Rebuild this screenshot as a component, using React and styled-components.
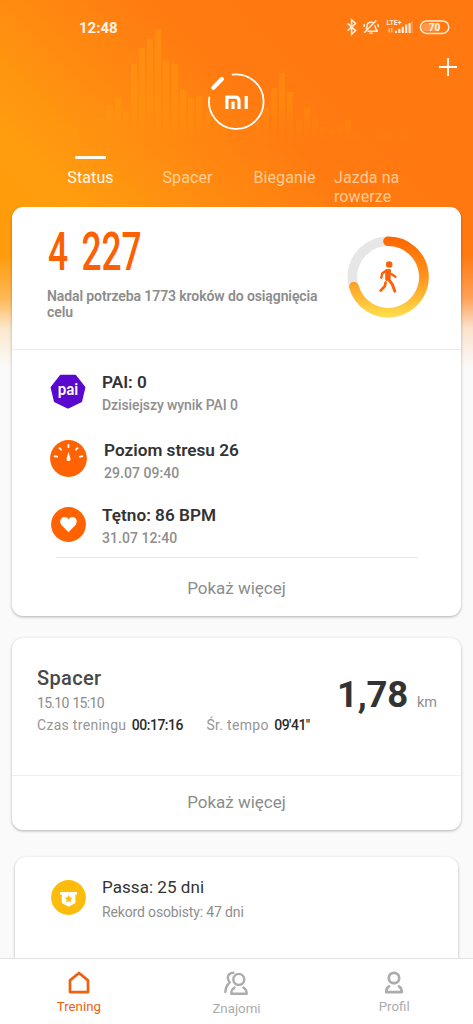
import React from 'react';
import styled, { createGlobalStyle } from 'styled-components';

const bars = [
  [48, 118], [56, 124], [64, 128], [72, 127], [80, 127], [90, 122],
  [98, 119], [107, 105], [115, 97], [123, 111], [131, 64], [139, 48],
  [147, 39], [155, 29], [163, 61], [172, 64], [180, 89], [188, 98],
  [196, 96], [205, 112], [213, 120], [221, 126], [255, 120], [263, 108],
  [271, 88], [279, 73], [287, 92], [296, 120], [304, 108], [312, 118],
  [320, 127], [329, 130], [337, 124], [345, 120], [353, 133], [361, 137],
  [377, 130], [385, 134], [401, 132],
];

function Wave() {
  return (
    <WaveSvg width="473" height="160" viewBox="0 0 473 160">
      <defs>
        <linearGradient id="wave" x1="0" y1="28" x2="0" y2="144" gradientUnits="userSpaceOnUse">
          <stop offset="0" stopColor="#ffa216" stopOpacity="0.4" />
          <stop offset="0.65" stopColor="#ffa00e" stopOpacity="0.32" />
          <stop offset="1" stopColor="#ff9a0e" stopOpacity="0" />
        </linearGradient>
      </defs>
      {bars.map(([x, y]) => (
        <rect key={x} x={x} y={y} width="6" height={144 - y} fill="url(#wave)" />
      ))}
    </WaveSvg>
  );
}

function StatusIcons() {
  return (
    <svg width="106" height="20" viewBox="345 17 106 20" fill="none" stroke="#ffeedd">
      <path d="M347.6 23.4l8 7.2-4 3.6V19.8l4 3.6-8 7.2" strokeWidth="1.5" />
      <path d="M366 29.6c.8-.9 1-1.9 1-3.2 0-2.4 1.6-4.2 4-4.2 1 0 1.9.3 2.6.9M375 25.2c.1 2.6.4 3.8 2 5.2v.9h-9.4M369.4 33.3h3.4M364.2 32.8l12-12.4M364.4 24.2l-.4 3M377.8 24.2l.5 2.8" strokeWidth="1.5" />
      <text x="386.5" y="25" fontSize="7" fontWeight="700" fontFamily="Roboto, sans-serif" fill="#ffeedd" stroke="none" textLength="15" lengthAdjust="spacingAndGlyphs">LTE+</text>
      <path d="M389.2 32.6v-4.4M391.8 28v4.4" strokeWidth="1" />
      <path d="M396 33v-2.2M399.4 33v-4.2M402.8 33v-6.2M406.2 33v-8.4M409.6 33V23" strokeWidth="2.2" />
      <path d="M412 33V21" strokeWidth="1.2" opacity="0.35" />
      <rect x="420.4" y="21" width="28.4" height="12.4" rx="6.2" strokeWidth="1.5" />
      <path d="M425.8 23.2h13.4v8h-13.4a4 4 0 0 1 0-8z" fill="#ffc494" fillOpacity="0.45" stroke="none" />
      <text x="434.4" y="30.7" fontSize="10" fontWeight="700" fontFamily="Roboto, sans-serif" fill="#fff4e8" stroke="none" textAnchor="middle">70</text>
    </svg>
  );
}

function MiLogo() {
  return (
    <svg width="60" height="60" viewBox="206 72 60 60" fill="none" stroke="#fff">
      <path d="M232.6 74.6A27.3 27.3 0 1 1 209.3 97.4" strokeWidth="1.8" strokeLinecap="round" />
      <path d="M213.3 87.8l8.6-8.8" strokeWidth="4.2" strokeLinecap="round" />
      <path d="M226.9 109V97.2h8.3q3.8 0 3.8 3.8V109M233 101.5v7.5M246.2 96v13" strokeWidth="3.2" />
    </svg>
  );
}

function StepsRing() {
  return (
    <svg width="82" height="82" viewBox="-41 -41 82 82">
      <defs>
        <linearGradient id="ring" x1="0" y1="-40" x2="0" y2="40" gradientUnits="userSpaceOnUse">
          <stop offset="0" stopColor="#ff6500" />
          <stop offset="0.5" stopColor="#ff941c" />
          <stop offset="1" stopColor="#ffdf4c" />
        </linearGradient>
      </defs>
      <circle r="35.7" fill="none" stroke="#e6e6e6" strokeWidth="9.6" />
      <path d="M0-35.7A35.7 35.7 0 1 1-34.1 9.6" fill="none" stroke="url(#ring)" strokeWidth="9.6" strokeLinecap="round" />
      <g fill="none" stroke="#fb6209" strokeLinecap="round" strokeLinejoin="round">
        <circle cx="1.2" cy="-12.5" r="3.3" fill="#fb6209" stroke="none" />
        <path d="M-1.4-6.4L1.6-6.6 1.2 1.6-1.4 2.6z" strokeWidth="2.8" fill="#fb6209" />
        <path d="M-1.6-6.4l-4.2 3L-6.7.8" strokeWidth="2.4" />
        <path d="M3.4-3L7.4-.2" strokeWidth="2.4" />
        <path d="M.2 2l4.2 5.4 2.4 6.8" strokeWidth="3" />
        <path d="M-2.4 5.6l-.8 3.6-4.2 4.4" strokeWidth="2.7" />
      </g>
    </svg>
  );
}

function PaiIcon() {
  return (
    <svg width="36" height="36" viewBox="-18 -18 36 36">
      <path
        d="M0 16.4L12.9 10.1 16.2-3.6 7.2-15H-7.2L-16.2-3.6-12.9 10.1z"
        fill="#5a08cf"
        stroke="#5a08cf"
        strokeWidth="2.4"
        strokeLinejoin="round"
      />
      <text x="0" y="3.8" textAnchor="middle" fontSize="16" fontWeight="600" fontFamily="Roboto, sans-serif" fill="#fff" textLength="20.5" lengthAdjust="spacingAndGlyphs">
        pai
      </text>
    </svg>
  );
}

function StressIcon() {
  return (
    <svg width="37" height="37" viewBox="-18.5 -18.5 37 37">
      <circle r="18.4" fill="#ff6200" />
      <path d="M0-6.8L2 .4q.2 2.2-2 2.2T-2 .4z" fill="#fff" />
      <path d="M0-13.6v2.2M-9-10.4l1.6 1.6M9-10.4L7.4-8.8M-13.8-2.2l2.4.3M13.8-2.2l-2.4.3" stroke="#fff" strokeWidth="1.9" strokeLinecap="round" />
    </svg>
  );
}

function HeartIcon() {
  return (
    <svg width="35" height="35" viewBox="-17.5 -17.5 35 35">
      <circle r="17.4" fill="#ff6200" />
      <path d="M0 7.8L-6.8.7C-10-3.2-7.4-7.4-4-7.4-2.2-7.4-.8-6.6 0-5.2.8-6.6 2.2-7.4 4-7.4 7.4-7.4 10-3.2 6.8.7z" fill="#fff" />
    </svg>
  );
}

function BadgeIcon() {
  return (
    <svg width="35" height="35" viewBox="-17.5 -17.5 35 35">
      <circle r="17.4" fill="#fbbc0b" />
      <path d="M-8.2-5.6H8.4v2.8H6.9V5.6L.1 9.2-6.7 5.6V-2.8h-1.5z" fill="#fff" />
      <path d="M.1-2.7l1.2 2.6 2.9.3L2 2.1l.6 2.8L.1 3.5-2.4 4.9-1.8 2.1-4 .2l2.9-.3z" fill="#fbbc0b" />
    </svg>
  );
}

function HomeIcon() {
  return (
    <svg width="24" height="24" viewBox="0 0 24 24" fill="none" stroke="currentColor" strokeWidth="2.7" strokeLinejoin="round">
      <path d="M3 9.4L12 2l9 7.4v11.7H3z" />
    </svg>
  );
}

function FriendsIcon() {
  return (
    <svg width="26" height="26" viewBox="0 0 26 26" fill="none" stroke="currentColor" strokeWidth="2.4" strokeLinecap="round">
      <circle cx="15.8" cy="8.4" r="5.5" />
      <path d="M11.6 16.5q-3.2 1.8-3.3 6.2h15.4q-.1-4.4-3.3-6.2" strokeLinejoin="round" />
      <path d="M10.4 1.8Q5.6 2.2 4.8 6.2q-.2 3 2 5.2M5.6 12.6Q2.6 15.6 2.4 21" />
    </svg>
  );
}

function ProfileIcon() {
  return (
    <svg width="24" height="24" viewBox="0 0 24 24" fill="none" stroke="currentColor" strokeWidth="2.7" strokeLinecap="round">
      <circle cx="12" cy="7" r="5.2" />
      <path d="M7 15.4q-2.8 1.8-2.7 5.7h15.4q.1-3.9-2.7-5.7" strokeLinejoin="round" />
    </svg>
  );
}

const metrics = [
  { icon: <PaiIcon />, title: 'PAI: 0', sub: 'Dzisiejszy wynik PAI 0', height: 69, indent: 0, space: -0.1 },
  { icon: <StressIcon />, title: 'Poziom stresu 26', sub: '29.07 09:40', height: 67, indent: 2, space: 0.05 },
  { icon: <HeartIcon />, title: 'Tętno: 86 BPM', sub: '31.07 12:40', height: 64, indent: 0, space: 0.05 },
];

function App() {
  return (
    <Screen>
      <GlobalStyle />
      <Wave />

      <Header>
        <StatusBar>
          <Clock>12:48</Clock>
          <StatusIcons />
        </StatusBar>
        <Toolbar>
          <span />
          <MiLogo />
          <AddButton aria-label="Dodaj">
            <svg width="20" height="20" viewBox="0 0 20 20" stroke="#fff" strokeWidth="1.8">
              <path d="M10 1v18M1 10h18" />
            </svg>
          </AddButton>
        </Toolbar>
        <Tabs>
          <Tab $active>Status</Tab>
          <Tab>Spacer</Tab>
          <Tab>Bieganie</Tab>
          <Tab $left>Jazda na rowerze</Tab>
        </Tabs>
      </Header>

      <Feed>
        <Card>
          <Summary>
            <div>
              <Steps>4 227</Steps>
              <Goal>Nadal potrzeba 1773 kroków do osiągnięcia celu</Goal>
            </div>
            <StepsRing />
          </Summary>
          <Metrics>
            {metrics.map((m) => (
              <Metric key={m.title} $height={m.height}>
                <IconSlot>{m.icon}</IconSlot>
                <MetricText $indent={m.indent}>
                  <h3>{m.title}</h3>
                  <MetricSub $space={m.space}>{m.sub}</MetricSub>
                </MetricText>
              </Metric>
            ))}
          </Metrics>
          <ShortRule />
          <More $height={58} $pad="1px 0 0">Pokaż więcej</More>
        </Card>

        <Card>
          <Workout>
            <WorkoutInfo>
              <h2>Spacer</h2>
              <time>15.10 15:10</time>
              <Stats>
                <Label>Czas treningu</Label>
                <Value>00:17:16</Value>
                <Label $gap>Śr. tempo</Label>
                <Value>09'41"</Value>
              </Stats>
            </WorkoutInfo>
            <Distance>
              <strong>1,78</strong>
              <span>km</span>
            </Distance>
          </Workout>
          <More $height={54} $pad="0 0 3px">Pokaż więcej</More>
        </Card>

        <Card $inset>
          <Streak>
            <BadgeIcon />
            <StreakText>
              <h3>Passa: 25 dni</h3>
              <p>Rekord osobisty: 47 dni</p>
            </StreakText>
          </Streak>
        </Card>
      </Feed>

      <Nav>
        <NavItem $active>
          <HomeIcon />
          <span>Trening</span>
        </NavItem>
        <NavItem>
          <FriendsIcon />
          <span>Znajomi</span>
        </NavItem>
        <NavItem>
          <ProfileIcon />
          <span>Profil</span>
        </NavItem>
      </Nav>
    </Screen>
  );
}

export default App;

const GlobalStyle = createGlobalStyle`
  * {
    box-sizing: border-box;
    margin: 0;
    padding: 0;
  }

  body {
    font-family: Roboto, 'Noto Sans', sans-serif;
    background: #fafafa;
    overflow: hidden;
  }

  svg {
    display: block;
    flex-shrink: 0;
  }
`;

const Screen = styled.div`
  position: relative;
  display: flex;
  flex-direction: column;
  width: 473px;
  height: 1024px;
  overflow: hidden;
  background:
    linear-gradient(to bottom, rgba(250, 250, 250, 0) 255px, rgba(250, 250, 250, 0.3) 298px, rgba(250, 250, 250, 0.8) 328px, #fafafa 368px),
    linear-gradient(45deg, #ff9a0c 0, #ff9c0c 115px, #ff9d0e 170px, #ff8e11 255px, #ff8810 290px, #ff8110 332px, #ff7a10 372px, #ff7810 100%) 0 0 / 473px 370px no-repeat,
    #fafafa;
`;

const WaveSvg = styled.svg`
  position: absolute;
  top: 0;
  left: 0;
`;

const Header = styled.header`
  position: relative;
  height: 207px;
  flex-shrink: 0;
`;

const StatusBar = styled.div`
  display: flex;
  align-items: center;
  justify-content: space-between;
  height: 54px;
  padding: 0 22px 0 79px;
`;

const Clock = styled.span`
  padding-top: 2px;
  color: #fff4e6;
  font-size: 15px;
  font-weight: 700;
  line-height: 20px;
`;

const Toolbar = styled.div`
  display: grid;
  grid-template-columns: 206px 60px 1fr;
  height: 102px;
  padding-top: 18px;
`;

const AddButton = styled.button`
  justify-self: end;
  align-self: start;
  width: 20px;
  height: 20px;
  margin: -15px 15px 0 0;
  border: none;
  background: none;
  cursor: pointer;
`;

const Tabs = styled.nav`
  display: grid;
  grid-template-columns: repeat(4, 97px);
  padding-left: 42px;
`;

const Tab = styled.a`
  padding-right: ${(p) => (p.$left ? '10px' : '0')};
  padding-left: ${(p) => (p.$left ? '1px' : '0')};
  color: ${(p) => (p.$active ? '#fff8ea' : 'rgba(255, 236, 205, 0.72)')};
  font-size: 16px;
  line-height: 19px;
  letter-spacing: 0.1px;
  text-align: ${(p) => (p.$left ? 'left' : 'center')};

  &::before {
    content: '';
    display: block;
    width: 31px;
    height: 3px;
    margin: 0 auto 9px;
    border-radius: 1px;
    background: ${(p) => (p.$active ? '#fffaf0' : 'transparent')};
  }
`;

const Feed = styled.main`
  position: relative;
  display: flex;
  flex: 1;
  flex-direction: column;
  gap: 22px;
  min-height: 0;
  overflow: hidden;
`;

const Card = styled.section`
  flex-shrink: 0;
  margin: ${(p) => (p.$inset ? '5px 15px 0' : '0 12px')};
  border-radius: 11px;
  background: #fff;
  box-shadow: 0 1px 3px rgba(0, 0, 0, 0.3);
`;

const Summary = styled.div`
  display: flex;
  justify-content: space-between;
  height: 143px;
  padding: 29px 32px 0 35px;
  border-bottom: 1px solid #ececec;
`;

const Steps = styled.div`
  height: 52px;
  margin-left: 1px;
  color: #fb6003;
  font-size: 53.5px;
  font-weight: 500;
  line-height: 32px;
  word-spacing: 7px;
  transform: scaleX(0.66);
  transform-origin: left;
  white-space: nowrap;
`;

const Goal = styled.p`
  width: 285px;
  color: #8c8c8c;
  font-size: 14px;
  font-weight: 600;
  letter-spacing: -0.1px;
  line-height: 16px;
`;

const Metrics = styled.div`
  height: 207px;
  padding-top: 6px;
`;

const Metric = styled.div`
  display: flex;
  align-items: center;
  height: ${(p) => p.$height}px;
  padding-left: 37px;
`;

const IconSlot = styled.div`
  display: flex;
  justify-content: center;
  width: 38px;
`;

const MetricText = styled.div`
  margin-left: ${(p) => 15 + p.$indent}px;
  padding-top: 4px;

  h3 {
    color: #333;
    font-size: 17.2px;
    font-weight: 600;
    line-height: 24px;
  }
`;

const MetricSub = styled.p`
  color: #8e8e8e;
  font-size: 14px;
  font-weight: 500;
  line-height: 22px;
  letter-spacing: ${(p) => p.$space}px;
`;

const ShortRule = styled.hr`
  width: 362px;
  margin-left: 44px;
  border: none;
  border-top: 1px solid #e8e8e8;
`;

const More = styled.button`
  display: block;
  width: 100%;
  height: ${(p) => p.$height}px;
  padding: ${(p) => p.$pad};
  border: none;
  background: none;
  color: #8c8c8c;
  font-family: inherit;
  font-size: 17px;
  line-height: 20px;
  cursor: pointer;
`;

const Workout = styled.div`
  display: flex;
  justify-content: space-between;
  height: 138px;
  padding: 27px 24px 0 25px;
  border-bottom: 1px solid #efefef;
`;

const WorkoutInfo = styled.div`
  h2 {
    color: #484848;
    font-size: 20px;
    font-weight: 500;
    letter-spacing: 0.35px;
    line-height: 26px;
  }

  time {
    display: block;
    color: #8c8c8c;
    font-size: 14px;
    letter-spacing: -0.7px;
    line-height: 24px;
    word-spacing: 1px;
  }
`;

const Stats = styled.div`
  display: flex;
  white-space: nowrap;
  line-height: 20px;
`;

const Label = styled.span`
  margin-left: ${(p) => (p.$gap ? 23.5 : 0)}px;
  color: #969696;
  font-size: 14px;
  letter-spacing: 0.3px;
`;

const Value = styled.span`
  margin-left: 5.5px;
  color: #2b2b2b;
  font-size: 14px;
  font-weight: 500;
  letter-spacing: -0.5px;
`;

const Distance = styled.div`
  display: flex;
  align-items: baseline;
  height: 50px;
  padding-top: 7px;

  strong {
    color: #333;
    font-size: 36.5px;
    font-weight: 700;
    letter-spacing: -0.2px;
    line-height: 46px;
  }

  span {
    margin-left: 9px;
    color: #8f8f8f;
    font-size: 14.5px;
  }
`;

const Streak = styled.div`
  display: flex;
  height: 140px;
  padding: 23px 0 0 36px;
`;

const StreakText = styled.div`
  margin: -5px 0 0 16px;

  h3 {
    color: #333;
    font-size: 17px;
    font-weight: 400;
    letter-spacing: 0.05px;
    line-height: 24px;
  }

  p {
    color: #8e8e8e;
    font-size: 14px;
    line-height: 26px;
    letter-spacing: -0.15px;
  }
`;

const Nav = styled.nav`
  position: relative;
  display: grid;
  grid-template-columns: repeat(3, 1fr);
  flex-shrink: 0;
  height: 66px;
  border-top: 1px solid #e2e2e2;
  background: #fff;
`;

const NavItem = styled.a`
  display: flex;
  flex-direction: column;
  align-items: center;
  padding-top: 12px;
  color: ${(p) => (p.$active ? '#f0600f' : '#acacac')};

  span {
    margin-top: 4px;
    font-size: 13.3px;
    line-height: 16px;
  }
`;
